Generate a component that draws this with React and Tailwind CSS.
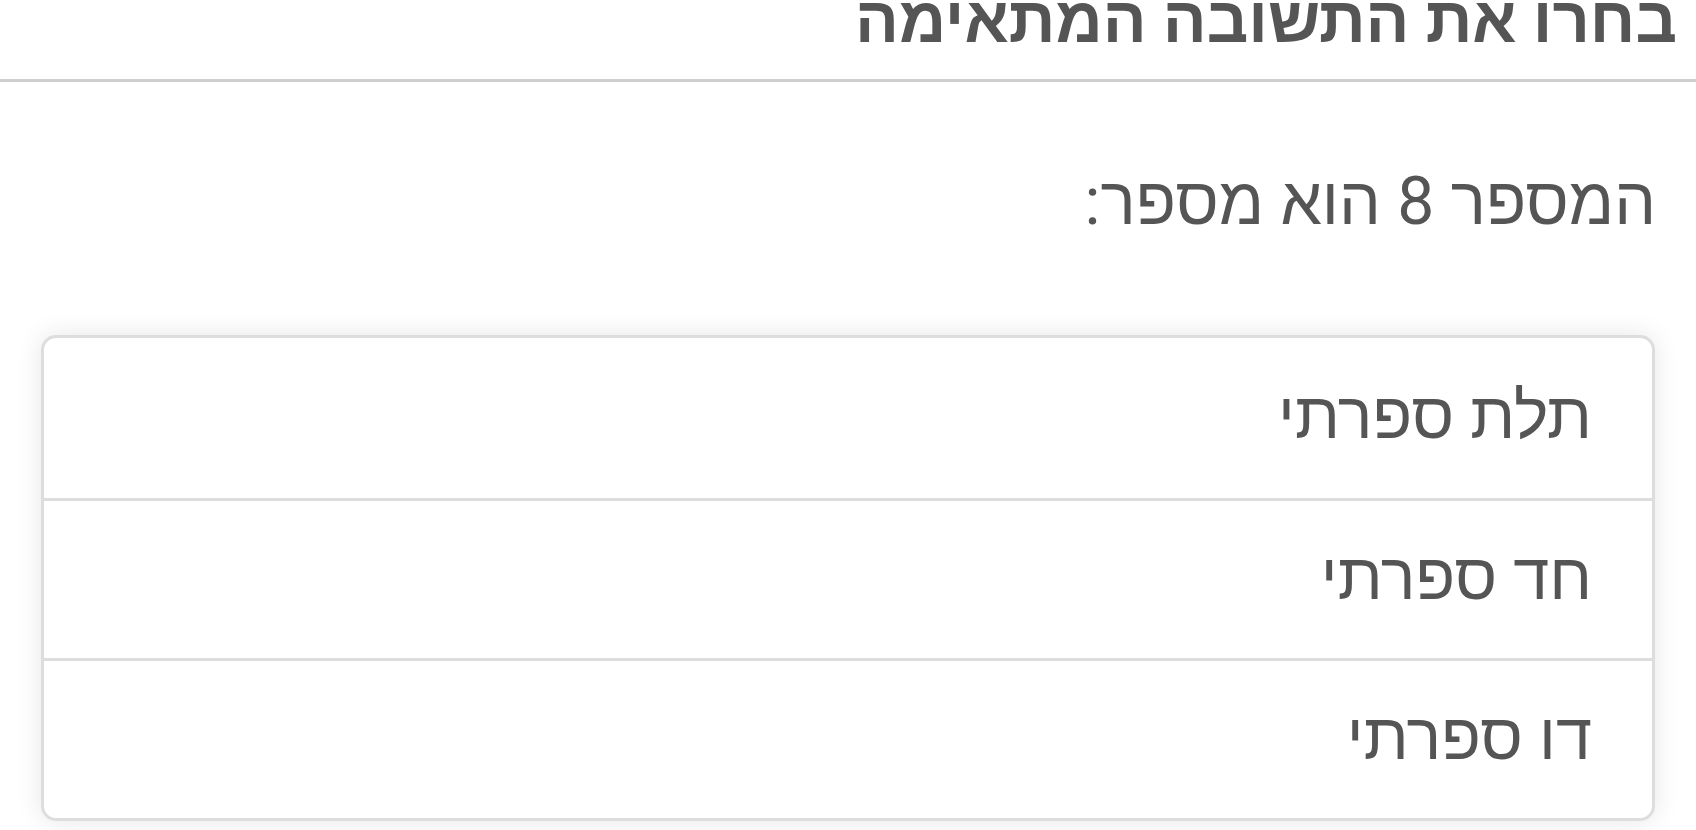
export default function App() {
  const options = ["תלת ספרתי", "חד ספרתי", "דו ספרתי"];
  return (
    <div
      dir="rtl"
      className="w-[1696px] h-[830px] overflow-hidden bg-white text-[#555555]"
      style={{ fontFamily: 'Roboto, "Noto Sans", sans-serif' }}
    >
      <header className="border-b-[3px] border-[#cfcfcf] pr-[19px] h-[82px] flex items-end">
        <h1 className="text-[65px] font-bold leading-none mb-[26px]">בחרו את התשובה המתאימה</h1>
      </header>
      <main className="pr-[41px] pl-[41px]">
        <p className="text-[66px] leading-none mt-[87px] -mr-[1px]">המספר 8 הוא מספר:</p>
        <div className="mt-[100px] rounded-[15px] border-[3px] border-[#dddddd] bg-white shadow-[0_0_26px_rgba(0,0,0,0.1)] overflow-hidden">
          {options.map((o, i) => (
            <div
              key={o}
              className={`h-[160px] flex items-center pr-[60px] pb-[3px] text-[65px] ${i > 0 ? "border-t-[3px] border-[#dddddd]" : ""}`}
            >
              {o}
            </div>
          ))}
        </div>
      </main>
    </div>
  );
}
